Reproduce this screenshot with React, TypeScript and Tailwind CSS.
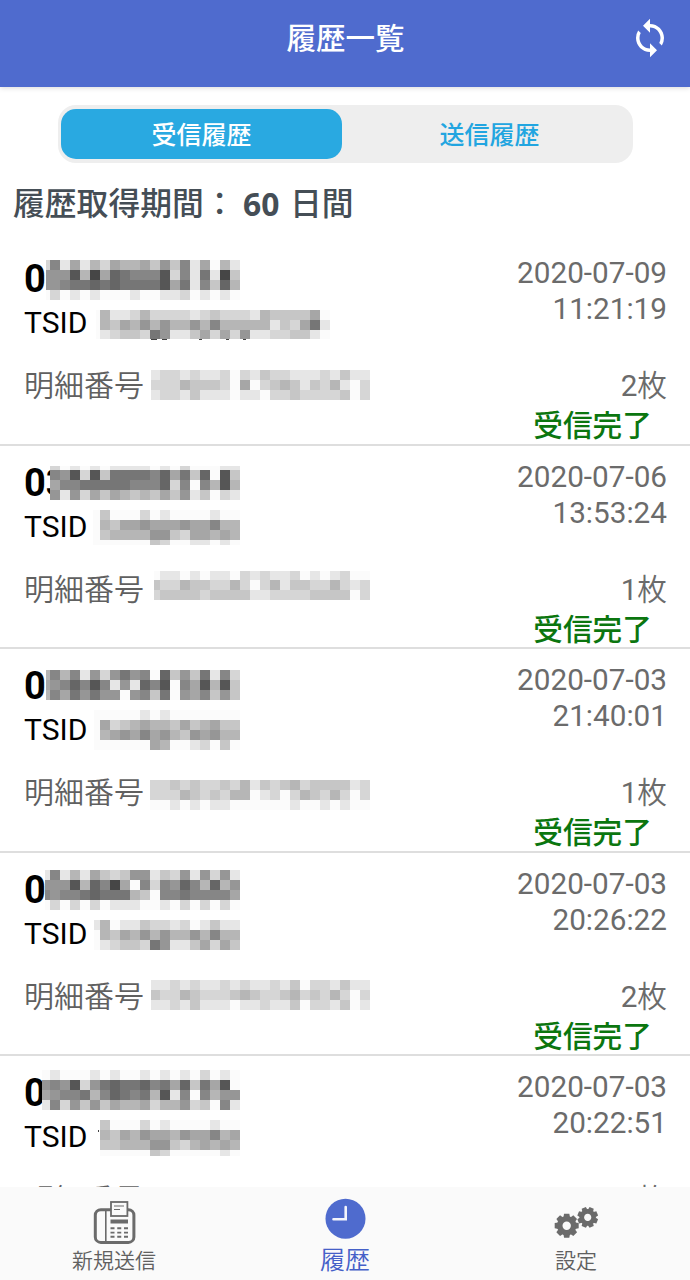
import { MdSync } from 'react-icons/md';
import clsx from 'clsx';

type Block = {
  x: number;
  y: number;
  rows: string[];
  heights?: number[];
};

type HistoryItem = {
  number: string;
  date: string;
  time: string;
  pages: number;
  masks: Block[];
  marks?: number[][];
};

// mask rows: one hex digit per cell, 0 = black, f = almost white
const items: HistoryItem[] = [
  {
    number: '0',
    date: '2020-07-09',
    time: '11:21:19',
    pages: 2,
    masks: [
      {
        x: 46,
        y: 18,
        rows: [
          'd8eaebdabbac9c8eafbe',
          '9995b4a678885d8e7e4c',
          '9987767677775a7e8c6b',
          'fdfefefffeffeedfefef',
        ],
      },
      {
        x: 96,
        y: 68,
        heights: [10, 10, 9],
        rows: [
          'fbeedbddddedcdddebccccaf',
          'fbcab9b9bb9b8bbbbbecda7e',
          'fedccd79eecadad9eeddccef',
        ],
      },
      {
        x: 151,
        y: 128,
        rows: [
          'eddedeedfdecddeeedecee',
          'dddbcccdfafdcbcecdbefd',
          'eddeceeefeefddcddddcfd',
        ],
      },
    ],
    marks: [
      [151, 97, 6, 1],
      [162, 97, 5, 1],
      [199, 97, 3, 1],
      [226, 97, 3, 1],
      [243, 97, 3, 1],
    ],
  },
  {
    number: '03',
    date: '2020-07-06',
    time: '13:53:24',
    pages: 1,
    masks: [
      {
        x: 50,
        y: 20,
        heights: [4, 10, 10, 10],
        rows: [
          'dfefefeeeefefdfffee',
          '895d5c777786a7c6f5c',
          'a88777778886d8f8b5b',
          '9e9dacabcbcac9ecfde',
        ],
      },
      {
        x: 93,
        y: 64,
        heights: [10, 10, 10, 5],
        rows: [
          'fcfffdfeffffeff',
          'fbcaa9aaa9aa8bb',
          'fcbbbb99cdaabab',
          'ffffffcdffeefef',
        ],
      },
      {
        x: 154,
        y: 125,
        heights: [9, 10, 10],
        rows: [
          'feefefeefdedeedfefedff',
          'cddbccddbdfdbeccddbded',
          'dccccdcccceeddddccccfd',
        ],
      },
    ],
  },
  {
    number: '0',
    date: '2020-07-03',
    time: '21:40:01',
    pages: 1,
    masks: [
      {
        x: 46,
        y: 21,
        rows: [
          'b8b8e9d9798f6c9c7e8d',
          'a986858e9e685f8a5b5c',
          'b8a79799f98c7f9a8c9c',
        ],
      },
      {
        x: 94,
        y: 61,
        rows: [
          'fffffefefffffff',
          'fadcbabbcacbacc',
          'fba9a8a9bc9a9bb',
          'ffffffabffedfcf',
        ],
      },
      {
        x: 150,
        y: 131,
        rows: [
          'ddcdcddcdbecdcbdcccced',
          'dddbcdcdbbfedfdbcdbdfd',
          'ffefefeeffffffeffefeff',
        ],
      },
    ],
  },
  {
    number: '0',
    date: '2020-07-03',
    time: '20:26:22',
    pages: 2,
    masks: [
      {
        x: 45,
        y: 17,
        rows: [
          'e8ebeacdc99ecd9e9d9e',
          '9995b684af8d8968b6b9',
          '898876777bcf8878888a',
          'fdfdfdfeeeffefdfdfdf',
        ],
      },
      {
        x: 94,
        y: 67,
        rows: ['ebfeecddedfecee', 'fbcab9b9bb9b8bb', 'fedccd79eecadac'],
      },
      {
        x: 151,
        y: 127,
        rows: [
          'eededeededeedecfddecee',
          'cddbcdddcbcddcbdcdbdfd',
          'eedeceeefeedeecfddecfe',
        ],
      },
    ],
  },
  {
    number: '0',
    date: '2020-07-03',
    time: '20:22:51',
    pages: 1,
    masks: [
      {
        x: 42,
        y: 14,
        rows: [
          'fefffefeffefefefdfef',
          '9895d97677687a6c7a5f',
          'a9887b86787b5e8f8b99',
          'e8d9c9cabbadbb9dcf8e',
        ],
      },
      {
        x: 100,
        y: 64,
        heights: [10, 10, 10, 6],
        rows: [
          'cfffdfeffffeff',
          'bcab9aab9aa8ba',
          'ccbbb99cdbabab',
          'fffffcdfffffef',
        ],
      },
    ],
    marks: [[98, 74, 1, 2]],
  },
];

const shade = (digit: string) => {
  const v = digit === 'f' ? 251 : parseInt(digit, 16) * 16 + 6;
  return `rgb(${v}, ${v}, ${v})`;
};

function Mask({ block }: { block: Block }) {
  const start = Math.floor(block.x / 10) * 10;
  let y = block.y;

  return (
    <g>
      {block.rows.map((row, r) => {
        const top = y;
        const height = block.heights ? block.heights[r] : 10;
        y += height;
        return row.split('').map((digit, c) => {
          const left = Math.max(block.x, start + c * 10);
          return (
            <rect
              key={`${r}-${c}`}
              x={left}
              y={top}
              width={start + (c + 1) * 10 - left}
              height={height}
              fill={shade(digit)}
            />
          );
        });
      })}
    </g>
  );
}

function HistoryRow({ item }: { item: HistoryItem }) {
  return (
    <li className="relative flex h-[204px] shrink-0 justify-between border-b-2 border-[#dedede] pr-[23px] pl-6 even:h-[203px]">
      <div className="flex flex-col pt-[15px] whitespace-nowrap">
        <span className="h-11 text-[38px] leading-[44px] font-bold text-black">{item.number}</span>
        <span className="h-11 text-[30px] leading-[44px] text-black">TSID</span>
        <span className="mt-[21px] text-[30px] leading-10 font-[350] text-[#606060]">明細番号</span>
      </div>
      <div className="flex flex-col items-end pt-[13px] text-[29.7px] text-[#6b6b6b]">
        <span className="leading-[36px]">{item.date}</span>
        <span className="leading-[35px]">{item.time}</span>
        <span className="mt-10 leading-10 font-[350]">
          <span className="font-normal">{item.pages}</span>枚
        </span>
        <span className="mr-[15px] leading-[39px] font-medium text-[#0b760f]">受信完了</span>
      </div>
      <svg
        className="absolute top-0 left-0"
        width="400"
        height="200"
        shapeRendering="crispEdges"
        aria-hidden="true"
      >
        {item.masks.map((block) => (
          <Mask key={block.y} block={block} />
        ))}
        {item.marks?.map(([x, y, w, h]) => (
          <rect key={x} x={x} y={y} width={w} height={h} fill="#444" />
        ))}
      </svg>
    </li>
  );
}

function FaxIcon() {
  return (
    <svg width="44" height="44" viewBox="0 0 44 44" fill="none" stroke="#6b6b6b">
      <rect x="2.3" y="9.8" width="38.6" height="32.6" rx="5.5" strokeWidth="3" />
      <path d="M12.8 10v32" strokeWidth="1.6" />
      <rect x="18" y="2" width="16.4" height="14" fill="#fafafa" strokeWidth="1.8" />
      <path d="M21 6h10M21 9.5h6" strokeWidth="1.2" />
      <path d="M17.5 21.5h17.5" strokeWidth="4" />
      <path
        d="M17.5 28.3h17.5M17.5 32.6h17.5M17.5 36.8h17.5"
        strokeWidth="1.9"
        strokeDasharray="4 2.75"
      />
    </svg>
  );
}

function ClockIcon() {
  return (
    <svg width="44" height="44" viewBox="0 0 44 44" className="overflow-visible">
      <circle cx="22.5" cy="18.7" r="20" fill="#4f6bce" />
      <path
        d="M22.7 7v12.3H10.5"
        fill="none"
        stroke="#f4f5fc"
        strokeWidth="2.6"
        strokeLinecap="round"
      />
    </svg>
  );
}

function Gear({ cx, cy, r, turn }: { cx: number; cy: number; r: number; turn: number }) {
  return (
    <g transform={`translate(${cx} ${cy}) rotate(${turn})`} fill="#6b6b6b">
      <circle r={r * 0.58} fill="none" stroke="#6b6b6b" strokeWidth={r * 0.46} />
      {[0, 45, 90, 135, 180, 225, 270, 315].map((angle) => (
        <path
          key={angle}
          transform={`rotate(${angle})`}
          d={`M${-r * 0.27} ${-r * 0.7}L${-r * 0.22} ${-r}H${r * 0.22}L${r * 0.27} ${-r * 0.7}Z`}
        />
      ))}
    </g>
  );
}

function GearsIcon() {
  return (
    <svg width="48" height="44" viewBox="0 0 48 44">
      <Gear cx={15.7} cy={25.7} r={12} turn={0} />
      <Gear cx={36.7} cy={17.4} r={10.3} turn={22.5} />
    </svg>
  );
}

const tabs = [
  { label: '新規送信', icon: FaxIcon, active: false, offset: 'pr-0.5' },
  { label: '履歴', icon: ClockIcon, active: true, offset: 'pl-0' },
  { label: '設定', icon: GearsIcon, active: false, offset: 'pl-0.5' },
];

export default function App() {
  return (
    <div className="flex h-[1280px] w-[690px] flex-col overflow-hidden bg-white font-[Roboto,'Noto_Sans_CJK_JP',sans-serif]">
      <header className="z-10 flex h-[87px] shrink-0 items-center bg-[#4f6bce] pb-[11px] text-white shadow-[0_1px_5px_rgba(0,0,0,0.15)]">
        <div className="w-[101px]" />
        <h1 className="flex-1 pt-0.5 text-center text-[29.5px] leading-10 font-medium">履歴一覧</h1>
        <button className="flex w-[100px] justify-end pr-[19px]">
          <MdSync className="h-[42px] w-[42px]" />
        </button>
      </header>

      <div className="mt-[18px] ml-[58px] flex h-[58px] w-[575px] shrink-0 rounded-[18px] bg-[#eee] py-1 pr-1 pl-[3px] text-[25px] font-medium">
        <button className="w-[281px] rounded-[15px] bg-[#29a9e1] pt-1 text-white">受信履歴</button>
        <button className="flex-1 pt-1 pl-2 text-[#22a5e0]">送信履歴</button>
      </div>

      <h2 className="flex h-[79px] shrink-0 items-center gap-2 pt-1 pl-[13px] text-[31.8px] font-medium text-[#454e56]">
        <span className="w-[222px] whitespace-nowrap">履歴取得期間：</span>
        <span className="w-[39px] pb-0.5 font-['Noto_Sans',sans-serif] leading-10 font-bold">60</span>
        <span>日間</span>
      </h2>

      <ul className="flex min-h-0 flex-1 flex-col overflow-hidden">
        {items.map((item, i) => (
          <HistoryRow key={i} item={item} />
        ))}
      </ul>

      <nav className="z-10 grid h-[93px] shrink-0 grid-cols-3 bg-[#fafafa]">
        {tabs.map(({ label, icon: Icon, active, offset }) => (
          <button key={label} className="flex flex-col items-center pt-[11px]">
            <span className="flex h-12 items-start justify-center pt-0.5">
              <Icon />
            </span>
            <span
              className={clsx(
                'leading-[30px] font-[350]',
                offset,
                active ? 'text-[25px] text-[#4560c8]' : 'text-[21px] text-[#606060]'
              )}
            >
              {label}
            </span>
          </button>
        ))}
      </nav>
    </div>
  );
}
